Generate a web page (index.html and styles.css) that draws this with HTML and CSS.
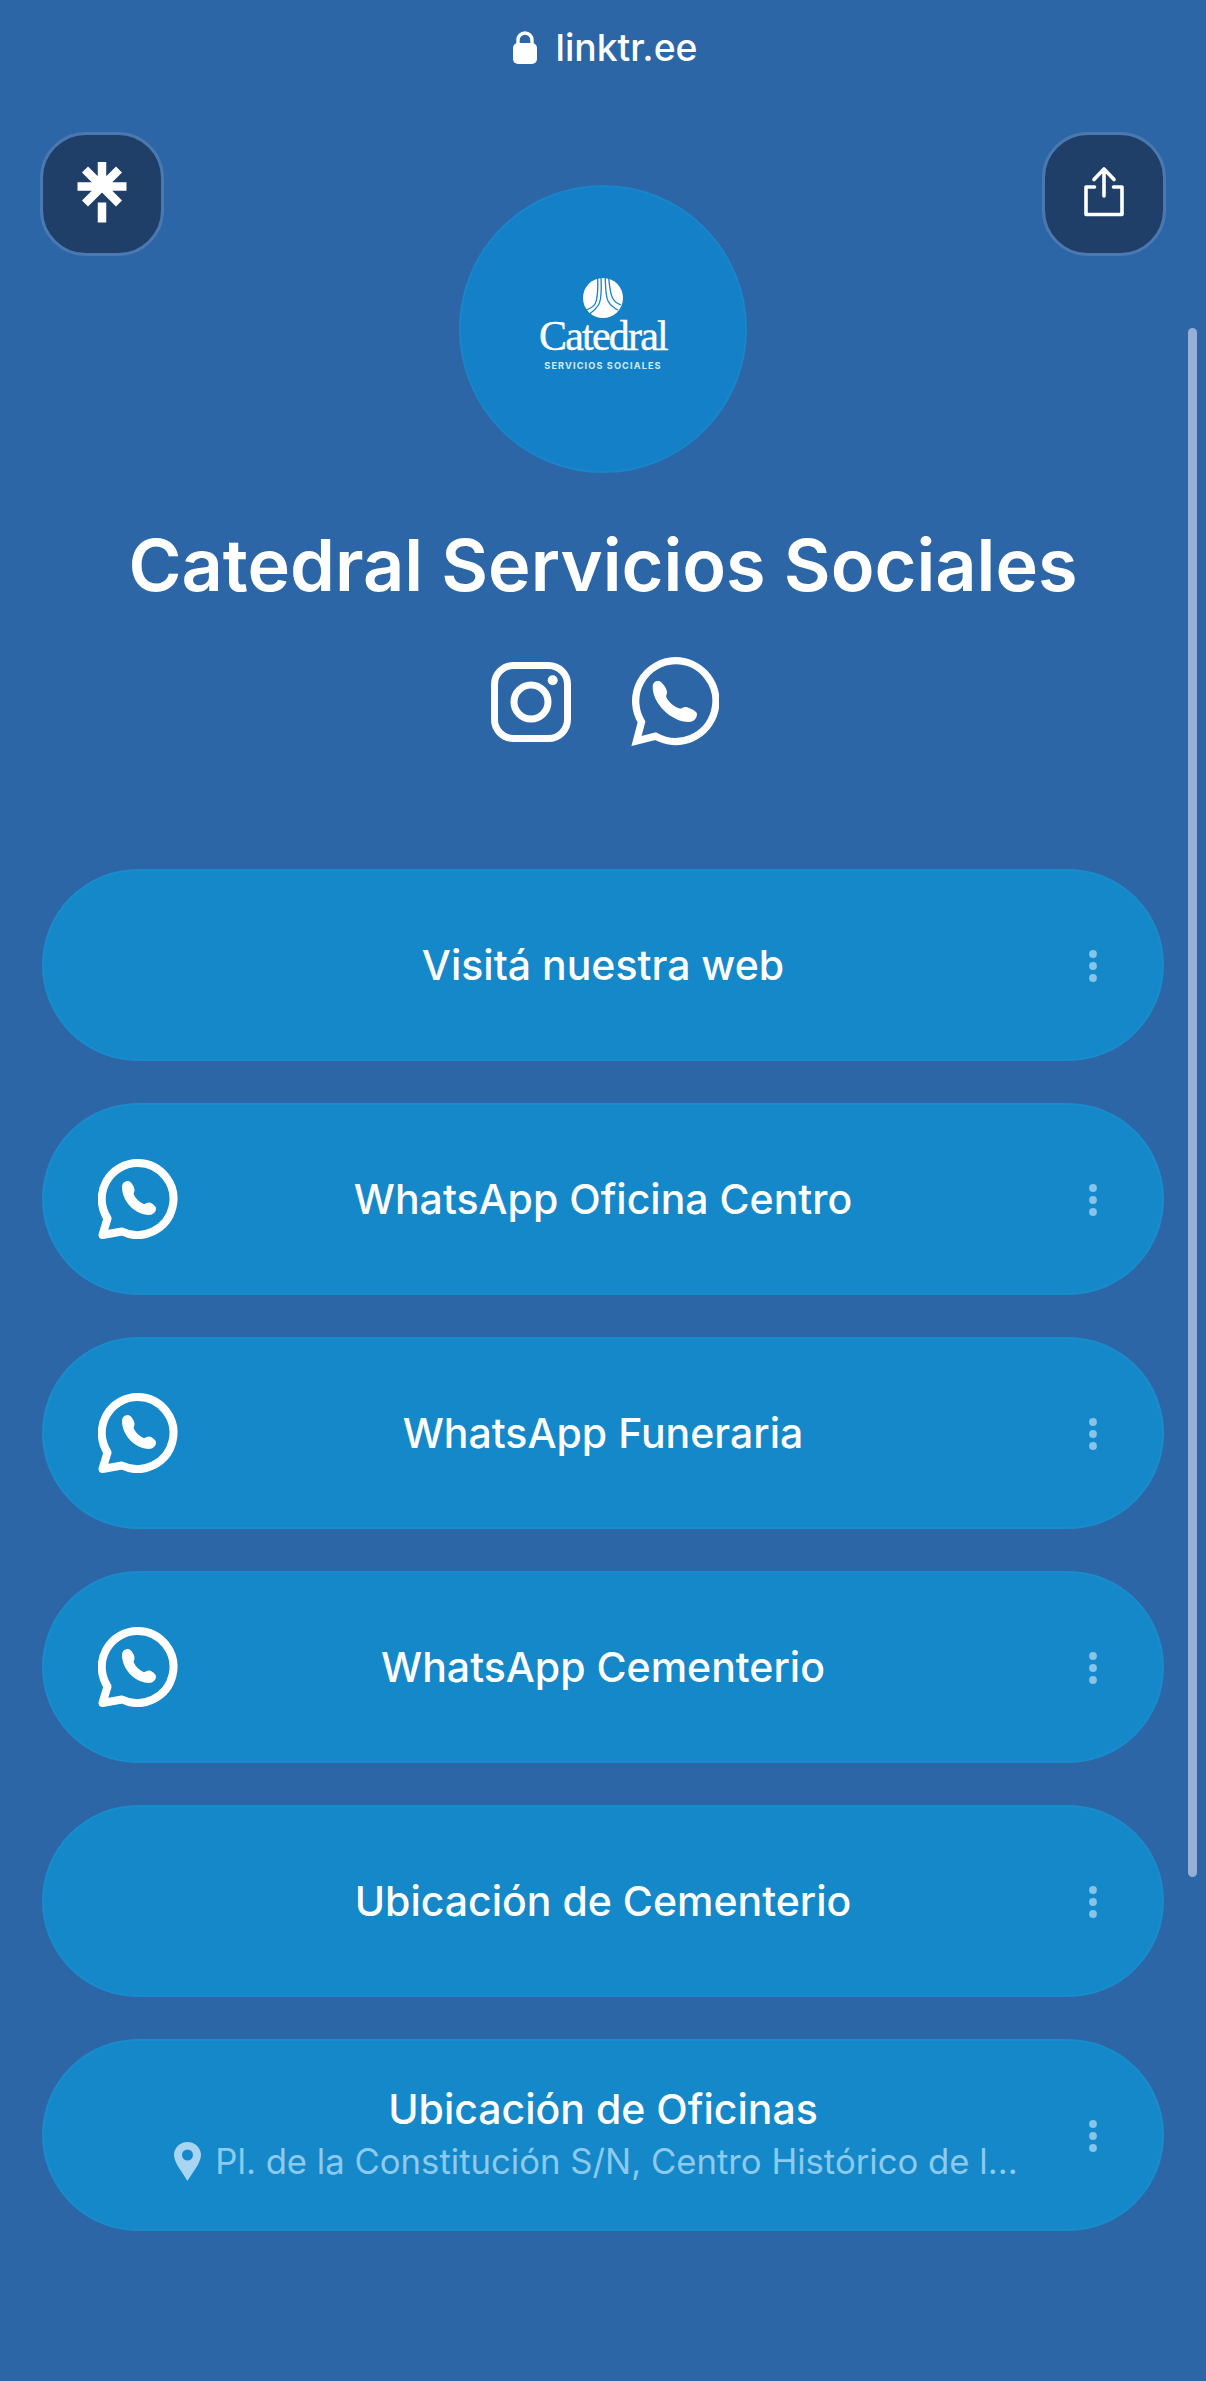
FILE: index.html
```html
<!DOCTYPE html>
<html lang="es">
<head>
<meta charset="utf-8">
<title>Catedral Servicios Sociales</title>
<link rel="stylesheet" href="styles.css">
</head>
<body>
<svg class="defs" width="0" height="0" aria-hidden="true">
  <symbol id="wa-large" viewBox="0 0 88 89">
    <path class="wa-ring-sharp" d="M44 3.7A40.4 40.4 0 1 1 24.5 79.2L5.5 84L10.5 65A40.4 40.4 0 0 1 44 3.7Z"/>
    <path class="wa-phone" d="M21.7 30C21.5 25 25 23.5 28 24C31 24.5 36 32 36 35C36 38 34.5 38 35.5 40.5C38 46 44 50 48.5 51.5C51 52 52 49.5 55 50C58 50.5 66 54 66 57C66 61 63 65 58 65C40 65 21.5 46 21.7 30Z"/>
  </symbol>
  <symbol id="wa-small" viewBox="0 0 80 80">
    <path class="wa-ring-round" d="M40 4A36 36 0 1 1 24 72.500L4.500 76L9.500 59.500A36 36 0 0 1 40 4Z"/>
    <path class="wa-phone" d="M24 28C24 24 27 22 30 22C33 22 36.500 28 36.500 31C36.500 33.500 35 34 36 36C38 40 42 43.500 45.500 45C47.500 45.500 48.500 43.500 51 43.500C54 44 58 47 58 49.500C58 53 55 56 51 56C37 56 24 42 24 28Z"/>
  </symbol>
  <symbol id="dots" viewBox="0 0 8 32">
    <circle cx="4" cy="4" r="3.900"/>
    <circle cx="4" cy="16" r="3.900"/>
    <circle cx="4" cy="28" r="3.900"/>
  </symbol>
</svg>

<div class="page">
  <div class="address">
    <svg class="lock" viewBox="0 0 24 33"><path d="M5 13V9a7 7 0 0 1 14 0v4" fill="none" stroke="#fff" stroke-width="3.400"/><rect x="0" y="12" width="24" height="21" rx="5" fill="#fff"/></svg>
    <span>linktr.ee</span>
  </div>

  <header class="hero">
    <button class="round-btn" type="button" aria-label="Linktree">
      <svg class="linktree" viewBox="0 0 50 61">
        <path d="M0.500 24.500H49.500M25 0V25M25 24.500L8 7.500M25 24.500L42 7.500M25 24.500L8 41.500M25 24.500L42 41.500M25 40.500V60.500"/>
      </svg>
    </button>
    <div class="avatar">
      <svg class="emblem" viewBox="0 0 40 40">
        <circle cx="20" cy="20" r="20" fill="#fff"/>
        <path d="M14.700 0C15 10 15 21 12 26C10 29 6 31 3 32M18 0C18.500 10 18.500 22 15.500 27C13 31 9.500 34 6.500 36" class="emblem-cut"/>
        <path d="M22.300 0C22.500 10 22.500 18 25 23C27 27 31 30 35 32M25.700 0C26.500 8 27 15 29.500 20C31.500 23.500 35 26 38 27" class="emblem-cut"/>
      </svg>
      <span class="logo-name">Catedral</span>
      <span class="logo-sub">SERVICIOS SOCIALES</span>
    </div>
    <button class="round-btn" type="button" aria-label="Compartir">
      <svg class="share" viewBox="0 0 46 50">
        <path d="M23 2V29M13 12.500L23 2L33 12.500M13.500 20H5V47.500H41V20H32.500"/>
      </svg>
    </button>
  </header>

  <h1 class="title">Catedral Servicios Sociales</h1>

  <div class="socials">
    <svg class="instagram" viewBox="0 0 80 80">
      <rect x="3.500" y="3.500" width="73" height="73" rx="19" class="ig-line"/>
      <circle cx="40" cy="40" r="17" class="ig-line"/>
      <circle cx="61.700" cy="18.300" r="5" fill="#fff"/>
    </svg>
    <svg class="wa-social"><use href="#wa-large"/></svg>
  </div>

  <main class="links">
    <a class="link"><span class="link-text">Visitá nuestra web</span><svg class="more"><use href="#dots"/></svg></a>
    <a class="link"><svg class="link-icon"><use href="#wa-small"/></svg><span class="link-text">WhatsApp Oficina Centro</span><svg class="more"><use href="#dots"/></svg></a>
    <a class="link"><svg class="link-icon"><use href="#wa-small"/></svg><span class="link-text">WhatsApp Funeraria</span><svg class="more"><use href="#dots"/></svg></a>
    <a class="link"><svg class="link-icon"><use href="#wa-small"/></svg><span class="link-text">WhatsApp Cementerio</span><svg class="more"><use href="#dots"/></svg></a>
    <a class="link"><span class="link-text">Ubicación de Cementerio</span><svg class="more"><use href="#dots"/></svg></a>
    <a class="link">
      <span class="link-text link-stack">
        <span>Ubicación de Oficinas</span>
        <span class="link-sub">
          <svg class="pin" viewBox="0 0 27 39"><path fill-rule="evenodd" d="M13.500 0C6 0 0 5.800 0 13C0 21 9 31 13.500 39C18 31 27 21 27 13C27 5.800 21 0 13.500 0ZM13.500 7.500A5.500 5.500 0 1 1 13.500 18.500A5.500 5.500 0 0 1 13.500 7.500Z"/></svg>
          Pl. de la Constitución S/N, Centro Histórico de l...
        </span>
      </span>
      <svg class="more"><use href="#dots"/></svg>
    </a>
  </main>

  <div class="scrollbar"></div>
</div>
</body>
</html>
```

FILE: styles.css
```css
* { box-sizing: border-box; }

html, body {
  margin: 0;
  padding: 0;
}

body {
  background: #2c66a6;
  color: #fff;
  font-family: Inter, "Liberation Sans", sans-serif;
}

.defs { position: absolute; }

.page {
  position: relative;
  width: 1206px;
  height: 2381px;
  overflow: hidden;
}

.address {
  height: 94px;
  display: flex;
  align-items: center;
  justify-content: center;
  gap: 19px;
  padding-left: 4px;
  font-size: 37.300px;
  font-weight: 500;
}

.lock { width: 24px; height: 33px; }

.hero {
  display: grid;
  grid-template-columns: 124px 1fr 124px;
  align-items: start;
  padding: 38px 40px 0;
}

.round-btn {
  width: 124px;
  height: 124px;
  padding: 0 0 3px;
  border: 3px solid #4a78b0;
  border-radius: 46px;
  background: #1f3f68;
  display: flex;
  align-items: center;
  justify-content: center;
}

.linktree { width: 50px; height: 61px; }
.linktree path { fill: none; stroke: #fff; stroke-width: 8.500; }

.share { width: 46px; height: 50px; margin-bottom: 2px; }
.share path {
  fill: none;
  stroke: #fff;
  stroke-width: 3.600;
  stroke-linecap: round;
  stroke-linejoin: round;
}

.avatar {
  justify-self: center;
  width: 288px;
  height: 288px;
  margin-top: 53px;
  border-radius: 50%;
  background: #1380c7;
  border: 2px solid #1a85c9;
  display: flex;
  flex-direction: column;
  align-items: center;
  padding-top: 91px;
}

.emblem { width: 40px; height: 40px; }
.emblem-cut { fill: none; stroke: #1380c7; stroke-width: 1.300; }

.logo-name {
  font-family: "Liberation Serif", serif;
  font-size: 42px;
  line-height: 44px;
  letter-spacing: -1.800px;
  margin-top: -4px;
  -webkit-text-stroke: 0.4px #fff;
}

.logo-sub {
  font-size: 9.200px;
  line-height: 12px;
  font-weight: 700;
  letter-spacing: 1.100px;
  margin-top: 2px;
  color: #d3ecfa;
}

.title {
  margin: 47px 0 0;
  text-align: center;
  font-size: 72px;
  line-height: 90px;
  font-weight: 600;
}

.socials {
  display: flex;
  justify-content: center;
  align-items: center;
  gap: 60px;
  margin-top: 47px;
  padding-left: 3px;
}

.instagram { width: 80px; height: 80px; }
.ig-line { fill: none; stroke: #fff; stroke-width: 7; }

.wa-social { width: 88px; height: 89px; }

.wa-ring-sharp,
.wa-ring-round {
  fill: none;
  stroke: #fff;
  stroke-width: 7.300;
}
.wa-ring-sharp { stroke-linejoin: miter; }
.wa-ring-round { stroke-width: 8; stroke-linejoin: round; }
.wa-phone { fill: #fff; }

.links {
  display: flex;
  flex-direction: column;
  gap: 42px;
  margin: 123px 42px 0;
}

.link {
  height: 192px;
  padding: 0 40px;
  border-radius: 96px;
  background: #1588c9;
  border: 2px solid #1a8ccb;
  display: grid;
  grid-template-columns: 80px minmax(0, 1fr) 80px;
  align-items: center;
}

.link-icon {
  grid-column: 1;
  grid-row: 1;
  width: 80px;
  height: 80px;
  margin-left: 14px;
  overflow: visible;
}

.link-text {
  grid-column: 2;
  grid-row: 1;
  text-align: center;
  font-size: 41px;
  line-height: 52px;
  font-weight: 500;
}

.link-stack {
  display: flex;
  flex-direction: column;
  align-items: center;
}

.link-sub {
  display: flex;
  align-items: center;
  gap: 14px;
  margin-right: 14px;
  white-space: nowrap;
  font-size: 34.700px;
  font-weight: 400;
  color: #8ccaee;
}

.pin { width: 27px; height: 39px; fill: #a8d5f1; }

.more {
  grid-column: 3;
  grid-row: 1;
  justify-self: end;
  width: 8px;
  height: 32px;
  margin: 2px 25px 0 0;
  fill: #85c5ea;
}

.scrollbar {
  position: absolute;
  left: 1188px;
  top: 328px;
  width: 9px;
  height: 1549px;
  border-radius: 5px;
  background: #96afd6;
}
```
